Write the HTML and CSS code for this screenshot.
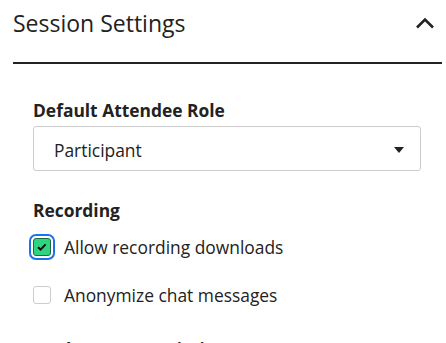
FILE: index.html
```html
<!DOCTYPE html>
<html lang="en">
<head>
    <meta charset="UTF-8">
    <meta name="viewport" content="width=device-width, initial-scale=1.0">
    <title>Session Settings</title>
    <link rel="stylesheet" href="styles.css">
</head>
<body>
    <div class="panel">
        <div class="panel-header">
            <h2>Session Settings</h2>
            <button class="collapse-button" aria-label="Collapse">
                <svg width="20" height="14" viewBox="0 0 20 14">
                    <path d="M2 11.5 L10 3.5 L18 11.5" fill="none" stroke="#222" stroke-width="2.6"/>
                </svg>
            </button>
        </div>
        <div class="panel-body">
            <div class="field">
                <div class="field-label">Default Attendee Role</div>
                <div class="select">
                    <span>Participant</span>
                    <span class="select-arrow"></span>
                </div>
            </div>
            <div class="field field-checks">
                <div class="field-label">Recording</div>
                <label class="check-row">
                    <span class="check-box checked">
                        <svg width="12" height="10" viewBox="0 0 12 10">
                            <path d="M2 5.2 L4.6 7.6 L9.6 2.4" fill="none" stroke="#111" stroke-width="2"/>
                        </svg>
                    </span>
                    Allow recording downloads
                </label>
                <label class="check-row">
                    <span class="check-box"></span>
                    Anonymize chat messages
                </label>
            </div>
            <div class="field">
                <div class="field-label">Moderator permissions</div>
            </div>
        </div>
    </div>
</body>
</html>
```

FILE: styles.css
```css
/* Панель настроек */
body {
    margin: 0;
    padding: 0;
    background-color: #fff;
    font-family: 'Open Sans', sans-serif;
    color: #222;
}

.panel {
    width: 446px;
}

.panel-header {
    display: flex;
    align-items: center;
    justify-content: space-between;
    margin: 0 4px 0 13px;
    padding: 7px 0 23px 0;
    border-bottom: 2px solid #222;
}

.panel-header h2 {
    margin: 0;
    font-size: 23px;
    font-weight: 400;
    line-height: 32px;
}

.collapse-button {
    background: none;
    border: none;
    padding: 0;
    margin-right: 7px;
    cursor: pointer;
    display: flex;
}

.panel-body {
    padding: 34px 25px 0 33px;
}

.field {
    margin-bottom: 27px;
}

.field-checks {
    margin-bottom: 30px;
}

.field-label {
    font-size: 17.4px;
    font-weight: 700;
    line-height: 24px;
}

/* Выпадающий список */
.select {
    display: flex;
    align-items: center;
    justify-content: space-between;
    margin-top: 4px;
    padding: 2px 16px 0 20px;
    height: 41px;
    border: 1px solid #ccc;
    border-radius: 3px;
    font-size: 17.4px;
}

.select-arrow {
    width: 0;
    height: 0;
    border-left: 5px solid transparent;
    border-right: 5px solid transparent;
    border-top: 6px solid #222;
}

/* Чекбоксы */
.check-row {
    display: flex;
    align-items: center;
    gap: 13px;
    margin-top: 13px;
    font-size: 17.4px;
    line-height: 24px;
    cursor: pointer;
}

.check-row + .check-row {
    margin-top: 24px;
}

.check-box {
    box-sizing: border-box;
    width: 18px;
    height: 18px;
    border: 1px solid #ccc;
    border-radius: 3px;
    display: flex;
    align-items: center;
    justify-content: center;
}

.check-box.checked {
    background-color: #2fd47f;
    border-color: #1f6b45;
    outline: 2px solid #1a73e8;
    outline-offset: 2px;
}
```
